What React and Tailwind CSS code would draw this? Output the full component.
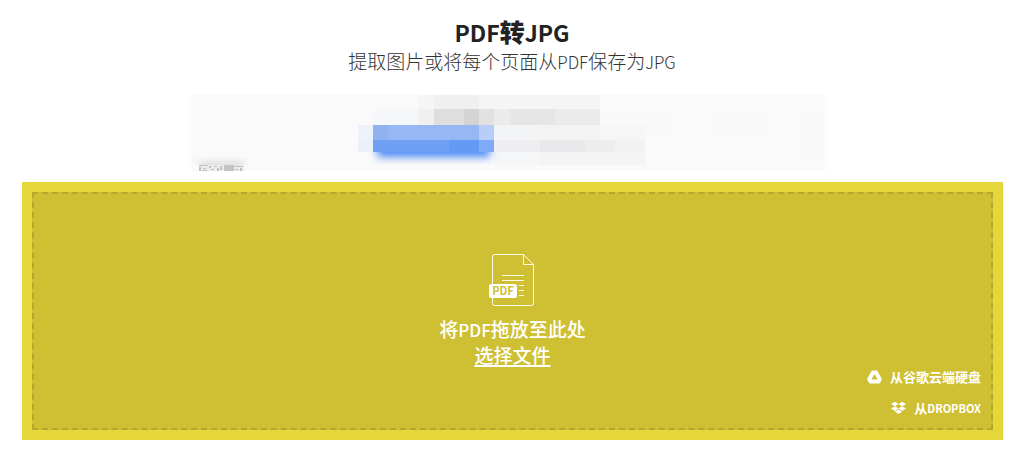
import { useRef } from "react";

const tiles = [
  [192, 95, 633, 76, "#fafafa"],
  [418, 95, 16, 14, "#f5f5f5"],
  [434, 95, 45, 14, "#f0f0f0"],
  [479, 95, 121, 14, "#f5f5f5"],
  [373, 109, 45, 16, "#f6f7fa"],
  [418, 109, 16, 16, "#f0f0f1"],
  [434, 109, 30, 16, "#dededf"],
  [464, 109, 15, 16, "#d4d4d5"],
  [479, 109, 15, 16, "#e2e2e2"],
  [494, 109, 16, 16, "#ebebeb"],
  [510, 109, 45, 16, "#e6e6e6"],
  [555, 109, 45, 16, "#ebebeb"],
  [600, 109, 75, 16, "#f9f9f9"],
  [358, 125, 15, 15, "#eef2fb"],
  [494, 125, 46, 15, "#f3f4f5"],
  [540, 125, 60, 15, "#f3f3f3"],
  [600, 125, 45, 15, "#f6f6f6"],
  [645, 125, 30, 15, "#f9f9f9"],
  [358, 140, 15, 12, "#ebf0fb"],
  [494, 140, 46, 12, "#eeeef1"],
  [540, 140, 45, 12, "#e8e8ea"],
  [585, 140, 30, 12, "#ededed"],
  [615, 140, 30, 12, "#f2f2f2"],
  [494, 152, 46, 13, "#f5f6f8"],
  [540, 152, 105, 13, "#f4f4f4"],
  [710, 110, 55, 30, "#f9f9f9"],
  [797, 110, 25, 50, "#f9f9f9"],
];

const blueTiles = [
  [373, 125, 15, 15, "#8fb2f1"],
  [388, 125, 91, 15, "#96b7f3"],
  [479, 125, 15, 15, "#b8cef8"],
  [373, 140, 76, 12, "#6fa0f4"],
  [449, 140, 30, 12, "#6499f5"],
  [479, 140, 15, 12, "#7eaaf7"],
];

const specks = [
  [199, 165, 9, 1], [199, 167, 2, 4], [203, 168, 3, 1], [202, 170, 5, 1],
  [209, 166, 2, 2], [211, 169, 3, 1], [214, 166, 3, 1], [217, 168, 2, 3],
  [220, 166, 2, 4], [233, 166, 10, 1], [235, 169, 3, 1], [240, 168, 2, 3],
];

function Tile([x, y, width, height, fill], i) {
  return <rect key={i} x={x} y={y} width={width} height={height} fill={fill} />;
}

function MosaicBanner() {
  return (
    <svg viewBox="190 93 644 79" className="h-[79px] w-[644px] max-w-full" aria-hidden="true">
      <defs>
        <filter id="soft" x="-20%" y="-100%" width="140%" height="300%">
          <feGaussianBlur stdDeviation="4" />
        </filter>
        <clipPath id="below">
          <rect x="358" y="152" width="150" height="13" />
        </clipPath>
        <clipPath id="shade">
          <rect x="192" y="145" width="70" height="20" />
        </clipPath>
      </defs>
      <rect x="190" y="94" width="638" height="77" fill="#fdfdfd" />
      <g shapeRendering="crispEdges">{tiles.map(Tile)}</g>
      <g clipPath="url(#below)">
        <rect x="377" y="138" width="113" height="19" fill="#4a88f5" filter="url(#soft)" />
      </g>
      <g shapeRendering="crispEdges">{blueTiles.map(Tile)}</g>
      <g clipPath="url(#shade)">
        <rect x="199" y="163" width="45" height="6" fill="#cccccc" filter="url(#soft)" />
      </g>
      <rect x="199" y="165" width="45" height="6" fill="#ececec" />
      <rect x="224" y="165" width="10" height="6" fill="#c4c4c4" />
      {specks.map(([x, y, w, h], i) => (
        <rect key={i} x={x} y={y} width={w} height={h} fill="#c0c0c0" />
      ))}
    </svg>
  );
}

function PdfIcon() {
  return (
    <svg viewBox="0 0 48 54" className="h-[54px] w-[48px]" fill="none" stroke="#fffbe0" aria-hidden="true">
      <path d="M5.500 1.500H34.500L44.500 11.500V50.500Q44.500 52.500 42.500 52.500H5.500Q3.500 52.500 3.500 50.500V3.500Q3.500 1.500 5.500 1.500Z" />
      <path d="M34.500 1.500V11.500H44.500" />
      <path d="M13 22.500H35M13 27.500H35M30 32.500H35M30 37.500H35M30 42.500H35" />
      <rect x="0" y="31" width="28" height="14" rx="2" fill="#fff" stroke="none" />
      <text
        x="14"
        y="42"
        textAnchor="middle"
        fill="#cfc033"
        stroke="none"
        className="font-['Noto_Sans_CJK_SC',sans-serif] text-[11px] font-bold"
      >
        PDF
      </text>
    </svg>
  );
}

function DriveIcon() {
  return (
    <svg viewBox="0 0 15 14" className="h-[14px] w-[15px]" aria-hidden="true">
      <path
        fillRule="evenodd"
        fill="#fff"
        d="M5.600 0.500H9.400Q10.100 0.500 10.500 1.200L14.700 8.500Q15 9.200 14.700 9.800L13.100 12.800Q12.700 13.400 12 13.400H3Q2.300 13.400 1.900 12.800L0.300 9.800Q0 9.200 0.300 8.500L4.500 1.200Q4.900 0.500 5.600 0.500ZM7.500 4L4.400 9.500H10.600Z"
      />
    </svg>
  );
}

function DropboxIcon() {
  return (
    <svg viewBox="0 0 15 14" className="h-[14px] w-[15px]" fill="#fff" aria-hidden="true">
      <path d="M3.900 0.700L7.500 3L3.900 5.300L0 3ZM11.100 0.700L15 3L11.100 5.300L7.500 3ZM3.900 5.300L7.500 7.600L3.900 9.900L0 7.600ZM11.100 5.300L15 7.600L11.100 9.900L7.500 7.600ZM3.900 10.700L7.500 8.500L11.100 10.700L7.500 13.100Z" />
    </svg>
  );
}

export default function App() {
  const fileInput = useRef(null);
  return (
    <main className="flex flex-col bg-white pt-4 pb-3 font-['Noto_Sans_CJK_SC',sans-serif]">
      <header className="text-center">
        <h1 className="h-8 text-[23px] leading-8 font-bold text-[#222]">
          PDF<span className="text-[25px] leading-none font-black">转</span>JPG
        </h1>
        <p className="h-[26px] text-[19px] leading-[26px] font-light text-[#333]">
          提取图片或将每个页面从<span className="text-[17px] leading-none">PDF</span>保存为
          <span className="text-[17px] leading-none">JPG</span>
        </p>
      </header>
      <div className="mt-[19px] flex justify-center">
        <MosaicBanner />
      </div>
      <section className="mr-[21px] ml-[22px] mt-[10px] bg-[#e5d63a] p-[10px]">
        <div className="flex flex-col border-2 border-dashed border-[#b5a72c] bg-[#cfc033] px-[10px] pt-[59px] pb-[10px] text-white">
          <div className="flex flex-col items-center text-[19px] leading-[26px] font-medium">
            <PdfIcon />
            <p className="mt-[9px]">
              将<span className="text-[17px] leading-none">PDF</span>拖放至此处
            </p>
            <button
              type="button"
              className="cursor-pointer underline decoration-2 underline-offset-2"
              onClick={() => fileInput.current.click()}
            >
              选择文件
            </button>
            <input ref={fileInput} type="file" accept="application/pdf" aria-label="选择文件" className="hidden" />
          </div>
          <div className="-mt-px flex flex-col items-end gap-[11px] text-[13px] leading-5 font-bold">
            <button type="button" className="flex cursor-pointer items-center gap-2">
              <DriveIcon />
              从谷歌云端硬盘
            </button>
            <button type="button" className="flex cursor-pointer items-center gap-2">
              <DropboxIcon />
              <span>
                从<span className="text-[11px] leading-none">DROPBOX</span>
              </span>
            </button>
          </div>
        </div>
      </section>
    </main>
  );
}
